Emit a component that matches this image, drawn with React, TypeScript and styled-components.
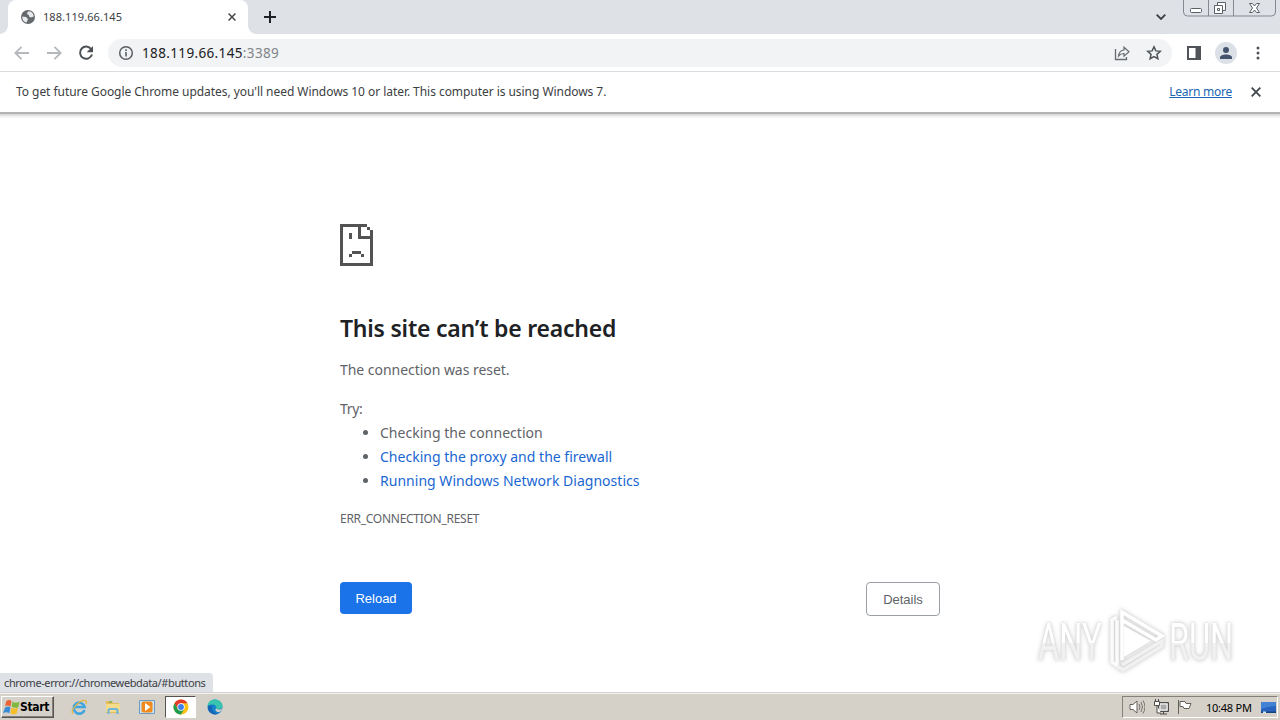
import type { ReactNode } from "react";
import styled, { createGlobalStyle } from "styled-components";

const GlobalStyle = createGlobalStyle`
  * {
    box-sizing: border-box;
  }
  body {
    margin: 0;
    overflow: hidden;
    background: #fff;
  }
  a {
    color: inherit;
    text-decoration: none;
  }
`;

const tips = [
  { text: "Checking the connection", isLink: false },
  { text: "Checking the proxy and the firewall", isLink: true },
  { text: "Running Windows Network Diagnostics", isLink: true },
];

const App = () => {
  return (
    <Screen>
      <GlobalStyle />
      <TabStrip>
        <TabCorner side="left" />
        <Tab>
          <GlobeIcon />
          <TabTitle>188.119.66.145</TabTitle>
          <CrossIcon size={8} />
        </Tab>
        <TabCorner side="right" />
        <NewTab>
          <svg width="12" height="12" viewBox="0 0 12 12">
            <path d="M6 0v12M0 6h12" stroke="#202124" strokeWidth="2" />
          </svg>
        </NewTab>
        <TabSearch>
          <svg width="10" height="6" viewBox="0 0 10 6">
            <path d="M.7.7 5 5 9.3.7" fill="none" stroke="#3c4043" strokeWidth="1.8" />
          </svg>
        </TabSearch>
        <WindowControls />
      </TabStrip>
      <Toolbar>
        <NavButtons>
          <ArrowIcon />
          <ArrowIcon flip />
          <ReloadIcon />
        </NavButtons>
        <AddressBar>
          <InfoIcon />
          <Url>
            188.119.66.145<span>:3389</span>
          </Url>
          <ShareIcon />
          <StarIcon />
        </AddressBar>
        <ToolbarActions>
          <svg width="14" height="14" viewBox="0 0 14 14">
            <path d="M0 0h14v14H0zM2 2v10h6.500V2z" fill="#505459" fillRule="evenodd" />
          </svg>
          <Avatar>
            <svg width="12" height="12" viewBox="0 0 12 12" fill="#46536f">
              <circle cx="6" cy="3" r="3" />
              <path d="M0 12v-1.500c0-4 12-4 12 0V12z" />
            </svg>
          </Avatar>
          <svg width="4" height="14" viewBox="0 0 4 14" fill="#505459">
            <circle cx="2" cy="2" r="1.500" />
            <circle cx="2" cy="7" r="1.500" />
            <circle cx="2" cy="12" r="1.500" />
          </svg>
        </ToolbarActions>
      </Toolbar>
      <InfoBar>
        <InfoText>
          To get future Google Chrome updates, you'll need Windows 10 or later. This computer is using Windows 7.
        </InfoText>
        <LearnMore href="#">Learn more</LearnMore>
        <CrossIcon size={10} />
      </InfoBar>
      <Page>
        <Content>
          <SadPageIcon />
          <Heading>This site can’t be reached</Heading>
          <Message>The connection was reset.</Message>
          <Try>Try:</Try>
          <Tips>
            {tips.map((tip) => (
              <Tip key={tip.text} isLink={tip.isLink}>
                <span>{tip.isLink ? <a href="#">{tip.text}</a> : tip.text}</span>
              </Tip>
            ))}
          </Tips>
          <ErrorCode>ERR_CONNECTION_RESET</ErrorCode>
          <Buttons>
            <ReloadButton>Reload</ReloadButton>
            <DetailsButton>Details</DetailsButton>
          </Buttons>
        </Content>
        <StatusBubble>chrome-error://chromewebdata/#buttons</StatusBubble>
        <Watermark>
          <WatermarkText>ANY</WatermarkText>
          <PlayMark />
          <WatermarkText>RUN</WatermarkText>
        </Watermark>
      </Page>
      <Taskbar>
        <StartButton>
          <WindowsFlag />
          <span>Start</span>
        </StartButton>
        <TaskItems>
          <TaskItem>
            <ExplorerIcon />
          </TaskItem>
          <TaskItem>
            <FolderIcon />
          </TaskItem>
          <TaskItem>
            <MediaIcon />
          </TaskItem>
          <TaskItem active>
            <ChromeIcon />
          </TaskItem>
          <TaskItem>
            <EdgeIcon />
          </TaskItem>
        </TaskItems>
        <Tray>
          <SpeakerIcon />
          <NetworkIcon />
          <FlagIcon />
          <Clock>10:48 PM</Clock>
          <DesktopIcon />
        </Tray>
      </Taskbar>
    </Screen>
  );
};

export default App;

const Icon = ({ size = 16, children }: { size?: number; children: ReactNode }) => (
  <svg width={size} height={size} viewBox="0 0 16 16" fill="none">
    {children}
  </svg>
);

const GlobeIcon = () => (
  <Icon>
    <circle cx="8" cy="8" r="7" fill="#65696d" />
    <path
      d="M2.300 7.500 6 8l2 2-.5 1.500-1 2C4 13 2 11 2.300 7.500zM8.500 2.300 7 4l.5 1.500 1.500.5 0 1.500 2 1 2.800-1C13.500 5 12 2.500 8.500 2.300z"
      fill="#e7e9eb"
    />
  </Icon>
);

const CrossIcon = ({ size }: { size: number }) => (
  <svg width={size} height={size} viewBox="0 0 10 10">
    <path d="m.7.7 8.600 8.600m0-8.600L.7 9.300" stroke="#45494d" strokeWidth="1.900" />
  </svg>
);

const WindowControls = () => (
  <Controls>
    <svg width="93" height="17" viewBox="0 0 93 17" fill="none" stroke="#858991">
      <path d="M.5 0v12q0 4 4 4h84q4 0 4-4V0M25.500 0v16M50.500 0v16" />
      <rect x="7.500" y="8.500" width="11" height="4" rx="1" fill="#fff" stroke="#5c6068" />
      <path d="M34.500 5V2.500h8v8H40" fill="#fff" stroke="#5c6068" />
      <path d="M31.500 5.500h8v8h-8zM34.500 8.500h2v2h-2z" fill="#fff" stroke="#5c6068" />
      <path d="M66.500 3.500h3l2 2.500 2-2.500h3L73.500 8l3 4.500h-3l-2-2.500-2 2.500h-3l3-4.500z" fill="#fff" stroke="#5c6068" />
    </svg>
  </Controls>
);

const ArrowIcon = ({ flip }: { flip?: boolean }) => (
  <Icon>
    <path
      d={flip ? "M1 8h13M8.500 1.800 14.700 8l-6.200 6.200" : "M15 8H2M7.500 1.800 1.300 8l6.200 6.200"}
      stroke="#b5b8bc"
      strokeWidth="1.800"
    />
  </Icon>
);

const ReloadIcon = () => (
  <Icon>
    <path d="M13.200 4.200A6.100 6.100 0 1 0 14 9.500" stroke="#4d5156" strokeWidth="2" />
    <path d="M15 1v6.300H8.700z" fill="#4d5156" />
  </Icon>
);

const InfoIcon = () => (
  <Icon>
    <circle cx="8" cy="8" r="6.300" stroke="#5b5f64" strokeWidth="1.500" />
    <path d="M8 7v4.500M8 4.300v1.600" stroke="#5b5f64" strokeWidth="1.600" />
  </Icon>
);

const ShareIcon = () => (
  <Icon>
    <path d="M1.500 4v10.500h11V12" stroke="#686c71" strokeWidth="1.300" />
    <path
      d="M4.500 11C5 7 7 5.300 10 5V2.200L15 6.700l-5 4.500V8.500C7.500 8.400 6 9.200 4.500 11z"
      stroke="#686c71"
      strokeWidth="1.200"
    />
  </Icon>
);

const StarIcon = () => (
  <Icon>
    <path
      d="m8 1.800 1.850 4.100 4.400.450-3.300 3 .95 4.400L8 11.500l-3.900 2.250.950-4.400-3.300-3 4.400-.450z"
      stroke="#505459"
      strokeWidth="1.500"
    />
  </Icon>
);

const SadPageIcon = () => (
  <svg width="33" height="42" viewBox="0 0 11 14" shapeRendering="crispEdges">
    <path
      d="M0 0h9v1H7v3h3V2h1v12H0zM1 1v12h9V5H6V1zM9 1h1v1H9zM3 3h1v2H3zM4 9h3v1H4zM3 10h1v1H3zM7 10h1v1H7z"
      fill="#535353"
      fillRule="evenodd"
    />
  </svg>
);

const PlayMark = () => (
  <svg width="58" height="66" viewBox="0 0 58 66" fill="none" strokeWidth="3.500">
    <path d="M10 9 5 12v42l5 4V12" stroke="#fbfbfb" />
    <path d="M10 58l6 4 39-24v-5L15 57" stroke="#f1f1f1" />
    <path d="M15 52V4l40 24-6 4-34-20" stroke="#fff" />
    <path d="M17 18v31l27-16z" fill="#fff" />
  </svg>
);

const WindowsFlag = () => (
  <svg width="17" height="17" viewBox="0 0 16 16">
    <path d="M3 2q3-2 5 0L7 7Q4 5 2 7z" fill="#ea6335" />
    <path d="M9 2.500q3 2 6.500 0l-1.200 5.500q-3 1-6.300-1z" fill="#7fb83b" />
    <path d="M2 8q3-2 5 0l-1 5.500Q3 11.500 0 13.500z" fill="#3a8bd6" />
    <path d="M8 8q3 2 6 0l-1 5.500q-3 2-6 0z" fill="#f5bd26" />
  </svg>
);

const ExplorerIcon = () => (
  <Icon>
    <path d="M13.500 11A5.500 5.500 0 1 1 13.700 8H4" stroke="#41a5e0" strokeWidth="2.600" />
    <path d="M2 14.500C-2 12 10-1 15 2c1 1 .5 2 0 3" stroke="#e5b53b" strokeWidth="1.200" />
  </Icon>
);

const FolderIcon = () => (
  <Icon>
    <path d="M1 2h6l1 2h6v10H1z" fill="#e4bd54" />
    <path d="M1 5h14v8H1z" fill="#f5dc8c" />
    <path d="M3.500 15v-3.500q0-1.500 1.500-1.500h6q1.500 0 1.500 1.500V15" stroke="#70b6dc" strokeWidth="2.200" />
    <path d="M4 3h3" stroke="#4baa62" />
  </Icon>
);

const MediaIcon = () => (
  <Icon>
    <path d="M.5 1.500h15v13H.5z" fill="#cfe2ef" stroke="#6a9cc4" />
    <rect x="2.500" y="2.500" width="11" height="11" rx="2" fill="#f08a1d" />
    <path d="m6 4 5.500 4L6 12z" fill="#fff" />
  </Icon>
);

const ChromeIcon = () => (
  <Icon>
    <circle cx="8" cy="8" r="7.500" fill="#fbc116" />
    <path d="M1.500 4.250A7.500 7.500 0 0 1 14.500 4.250H8L4.750 9.900z" fill="#e33b2e" />
    <path d="M1.500 4.250A7.500 7.500 0 0 0 8 15.500l3.250-5.600h-6.500z" fill="#229b4d" />
    <circle cx="8" cy="8" r="3.700" fill="#fff" />
    <circle cx="8" cy="8" r="2.900" fill="#3d80ea" />
  </Icon>
);

const EdgeIcon = () => (
  <Icon>
    <circle cx="8" cy="8" r="7.500" fill="#1782ce" />
    <path d="M.5 7C1 2 5 .5 8 .5c5 0 8 4 7.500 7C15 10 11 11 9 9.500c1-2-.5-4-3.500-4-2 0-4 .5-5 1.500z" fill="#38c4ae" />
    <path d="M5.500 7C4 10 6 14 11 14.500 8 17 1 14 .8 9 .8 6.500 4 5.500 5.500 7z" fill="#1765b5" />
    <path d="M9 9.500c2 2 5 1 6.500-.5-.5 2-1.500 3-3 4-3 .5-5-2-3.500-3.500z" fill="#d5d0c8" />
  </Icon>
);

const SpeakerIcon = () => (
  <Icon>
    <path d="M1 5.500h3L8 2v12l-4-3.500H1z" fill="#fff" stroke="#66635f" />
    <path d="M10 5q2 3 0 6M12 3q3 5 0 10M14 1.500q4 6.500 0 13" stroke="#77736e" />
  </Icon>
);

const NetworkIcon = () => (
  <Icon>
    <path d="M5.500 3.500h10v9h-10zM7 15h7M10.500 12v3" fill="#aaa" stroke="#4f4d49" />
    <path d="M7 5h7v6H7z" stroke="#fff" />
    <path d="M1.500 2.500h5v4h-5zM2.500 0v3M5.500 0v3M4 7v7h4" fill="#fff" stroke="#4f4d49" />
  </Icon>
);

const FlagIcon = () => (
  <Icon>
    <path d="M1.500 1v14M3 2.500h5l1 2h5l-2 5H7l-1-2H3z" fill="#fff" stroke="#64605a" />
  </Icon>
);

const DesktopIcon = () => (
  <svg width="15" height="13" viewBox="0 0 15 13">
    <path d="M0 1h15v11H0z" fill="#2864bd" />
    <path d="M0 1h15v4Q9 5 0 8z" fill="#4281d3" />
    <path d="M0 10.500h15V12H0z" fill="#164380" />
    <path d="M2 10.500h3V12H2z" fill="#d4eef8" />
  </svg>
);

const Screen = styled.div`
  width: 1280px;
  height: 720px;
  display: flex;
  flex-direction: column;
  overflow: hidden;
  font-family: "Noto Sans", sans-serif;
`;

const TabStrip = styled.div`
  display: flex;
  flex: 0 0 34px;
  background: #dee1e6;
`;

const TabCorner = styled.div<{ side: "left" | "right" }>`
  width: 8px;
  background: radial-gradient(
    circle at ${(props) => (props.side === "left" ? "0" : "8px")} 26px,
    #dee1e6 7.5px,
    #fff 8px
  );
  clip-path: inset(26px 0 0);
`;

const Tab = styled.div`
  display: flex;
  align-items: center;
  width: 240px;
  padding: 0 12px;
  background: #fff;
  border-radius: 8px 8px 0 0;

  > svg:last-child {
    margin-left: auto;
  }
`;

const TabTitle = styled.span`
  margin-left: 7px;
  padding-bottom: 2px;
  font-size: 11px;
  letter-spacing: 0.07px;
  color: #3c4043;
`;

const NewTab = styled.div`
  display: flex;
  align-items: center;
  padding-left: 8px;
`;

const TabSearch = styled.div`
  display: flex;
  align-items: center;
  margin-left: auto;
`;

const Controls = styled.div`
  margin: 0 4px 0 17px;
`;

const Toolbar = styled.div`
  display: flex;
  align-items: center;
  flex: 0 0 38px;
  padding: 0 14px;
  border-bottom: 1px solid #dadce0;
`;

const NavButtons = styled.div`
  display: flex;
  gap: 16px;
`;

const AddressBar = styled.div`
  display: flex;
  align-items: center;
  width: 1064px;
  height: 28px;
  margin-left: 14px;
  padding: 0 10px;
  background: #f1f3f4;
  border-radius: 14px;

  > svg:last-child {
    margin-left: 16px;
  }
`;

const Url = styled.span`
  flex: 1;
  margin-left: 8px;
  font-size: 13.5px;
  letter-spacing: 0.36px;
  color: #202124;

  span {
    color: #80858a;
  }
`;

const ToolbarActions = styled.div`
  display: flex;
  align-items: center;
  margin-left: 15px;

  > svg:last-child {
    margin-left: 19px;
  }
`;

const Avatar = styled.div`
  display: flex;
  align-items: center;
  justify-content: center;
  width: 22px;
  height: 22px;
  margin-left: 14px;
  border-radius: 50%;
  background: #dce0e7;
`;

const InfoBar = styled.div`
  display: flex;
  align-items: center;
  flex: 0 0 41px;
  padding: 0 19px 0 16px;
  border-bottom: 1px solid #b5b5b5;
  box-shadow: 0 1px 0 #b0b0b0, 0 3px 0 #dedede, 0 5px 0 #f4f4f4;
`;

const InfoText = styled.span`
  flex: 1;
  padding-bottom: 2px;
  font-size: 12px;
  letter-spacing: -0.05px;
  white-space: nowrap;
  color: #3c4043;
`;

const LearnMore = styled.a`
  margin-right: 19px;
  padding-bottom: 2px;
  font-size: 12px;
  letter-spacing: -0.25px;
  color: #1967b2;
  text-decoration: underline;
`;

const Page = styled.main`
  flex: 1;
  position: relative;
  padding-top: 111px;
  border-bottom: 1px solid #d4d2ce;
`;

const Content = styled.div`
  width: 600px;
  margin: 0 auto;
  color: #5f6368;
  font-size: 14px;
  line-height: 24px;

  > svg {
    display: block;
  }
`;

const Heading = styled.h1`
  margin: 47px 0 0;
  color: #202124;
  font-size: 23px;
  font-weight: 600;
  letter-spacing: -0.22px;
  line-height: 30px;
`;

const Message = styled.p`
  margin: 15px 0 0;
  letter-spacing: -0.04px;
`;

const Try = styled.p`
  margin: 15px 0 0;
  letter-spacing: -0.3px;
`;

const Tips = styled.ul`
  margin: 0;
  padding-left: 40px;
`;

const Tip = styled.li<{ isLink: boolean }>`
  letter-spacing: 0.02px;

  span {
    color: ${(props) => (props.isLink ? "#1967d2" : "#5f6368")};
  }
`;

const ErrorCode = styled.div`
  margin-top: 14px;
  font-size: 12px;
  letter-spacing: -0.28px;
`;

const Buttons = styled.div`
  display: flex;
  align-items: flex-start;
  justify-content: space-between;
  margin-top: 51px;
`;

const ReloadButton = styled.button`
  width: 72px;
  height: 32px;
  padding: 0;
  border: 0;
  border-radius: 4px;
  background: #1a73e8;
  color: #fff;
  font: 13px "Liberation Sans", Arial, sans-serif;
`;

const DetailsButton = styled(ReloadButton)`
  width: 74px;
  height: 34px;
  border: 1px solid #9aa0a6;
  background: #fff;
  color: #5f6368;
`;

const StatusBubble = styled.div`
  position: absolute;
  left: 0;
  bottom: 0;
  width: 213px;
  height: 19px;
  padding-left: 4px;
  background: #dee1e6;
  border-top-right-radius: 4px;
  color: #3c4043;
  font-size: 11px;
  letter-spacing: -0.39px;
  line-height: 20px;
  white-space: nowrap;
`;

const Watermark = styled.div`
  position: absolute;
  left: 1038px;
  bottom: 18px;
  display: flex;
  align-items: center;
  gap: 4px;
  filter: drop-shadow(0 0 1px #dadada) drop-shadow(0 0 2px #d2d2d2);
`;

// the wordmark is narrower than the font, so it is squeezed to 65px
const WatermarkText = styled.span`
  width: 104px;
  margin: 3px -39px 0 0;
  font: 52px/60px Roboto, sans-serif;
  white-space: nowrap;
  color: transparent;
  background: linear-gradient(#fff 50%, #f1f1f1 50%) text;
  transform: scaleX(0.625);
  transform-origin: left;
`;

const Taskbar = styled.footer`
  display: flex;
  align-items: flex-start;
  flex: 0 0 27px;
  padding: 2px 2px 0 1px;
  background: #d5d0c8;
  border-top: 1px solid #f4f2ee;
`;

const StartButton = styled.button`
  display: flex;
  align-items: center;
  width: 53px;
  height: 22px;
  padding: 0 1px;
  border: 1px solid;
  border-color: #fff #555 #555 #fff;
  background: #d5d0c8;
  box-shadow: inset -1px -1px #858078;
  color: #000;
  font: bold 12px "DejaVu Sans Condensed", sans-serif;
  letter-spacing: -0.35px;
`;

const TaskItems = styled.div`
  display: flex;
  gap: 3px;
  margin-left: 9px;
`;

const TaskItem = styled.div<{ active?: boolean }>`
  display: flex;
  align-items: center;
  justify-content: center;
  width: 31px;
  height: 22px;
  border: ${(props) => (props.active ? "1px solid" : "none")};
  border-color: #55524e #fff #fff #55524e;
  background: ${(props) => (props.active ? "#fff" : "transparent")};
`;

const Tray = styled.div`
  display: flex;
  align-items: center;
  width: 156px;
  height: 22px;
  margin-left: auto;
  padding: 0 1px 0 6px;
  gap: 8px;
  border: 1px solid;
  border-color: #858078 #fff #fff #858078;
`;

const Clock = styled.span`
  flex: 1;
  margin: 0 -2px 0 5px;
  font-size: 11px;
  letter-spacing: -0.25px;
  color: #000;
  white-space: nowrap;
`;
